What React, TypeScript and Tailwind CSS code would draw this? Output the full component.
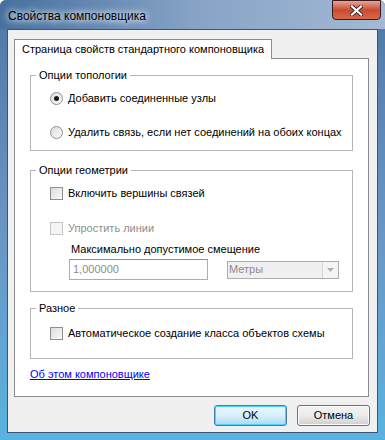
import { useState } from "react";

const font = { fontFamily: '"Liberation Sans", Arial, sans-serif' };

function Radio({ checked, label }: { checked: boolean; label: string }) {
  return (
    <div className="flex items-center gap-[5px] h-[16px] whitespace-nowrap">
      <span className="shrink-0 w-[13px] h-[13px] rounded-full border border-[#8e8f8f] bg-gradient-to-br from-[#dcdcdc] to-[#fbfbfb] flex items-center justify-center">
        {checked && <span className="w-[5px] h-[5px] rounded-full bg-[#1a1a1a]" />}
      </span>
      <span className="text-[11px] text-black leading-none">{label}</span>
    </div>
  );
}

function Check({ label, disabled }: { label: string; disabled?: boolean }) {
  return (
    <div className="flex items-center gap-[5px] h-[16px] whitespace-nowrap">
      <span
        className={`shrink-0 w-[13px] h-[13px] border ${
          disabled ? "border-[#c6c6c6] bg-[#f4f4f4]" : "border-[#8e8f8f] bg-gradient-to-br from-[#dcdcdc] to-[#fbfbfb]"
        }`}
      />
      <span className={`text-[11px] leading-none ${disabled ? "text-[#8d8d8d]" : "text-black"}`}>{label}</span>
    </div>
  );
}

function Group({ title, className, children }: { title: string; className: string; children: React.ReactNode }) {
  return (
    <div className={`relative border border-[#b5b5b5] ${className}`}>
      <span className="absolute -top-[9px] left-[5px] bg-white px-[3px] text-[11px] leading-[16px] text-black whitespace-nowrap">{title}</span>
      {children}
    </div>
  );
}

export default function App() {
  const [sel] = useState(0);
  return (
    <div
      className="w-[385px] h-[440px] flex flex-col bg-gradient-to-b from-[#4f77a6] via-[#6a94c4] to-[#58b2df] rounded-t-[6px]"
      style={font}
    >
      {/* заголовок */}
      <div className="h-[29px] flex items-start relative bg-gradient-to-r from-[#46709f] via-[#86a3c6] to-[#a3b9d4] rounded-t-[6px]">
        <span className="ml-[8px] mt-[7px] text-[12px] text-black [text-shadow:0_0_6px_#fff,0_0_8px_#fff]">
          Свойства компоновщика
        </span>
        <div className="absolute right-[4px] top-0 w-[49px] h-[20px] rounded-b-[4px] border border-[#3a1a1a] bg-gradient-to-b from-[#e8a493] via-[#c94a32] to-[#d9694b] flex items-center justify-center">
          <svg width="13" height="11" viewBox="0 0 13 11">
            <path d="M2 1.5 L11 9.5 M11 1.5 L2 9.5" stroke="#3a2a2a" strokeWidth="4" strokeLinecap="square" />
            <path d="M2 1.5 L11 9.5 M11 1.5 L2 9.5" stroke="#ffffff" strokeWidth="2.2" strokeLinecap="square" />
          </svg>
        </div>
      </div>

      {/* клиентская область */}
      <div className="mx-[7px] mb-[7px] flex-1 bg-[#f0f0f0] border border-[#3d5575] flex flex-col px-[6px] pt-[8px]">
        <div className="flex">
          <div className="h-[20px] px-[7px] border border-b-0 border-[#898c95] bg-white text-[11px] leading-[19px] text-black relative top-[1px] whitespace-nowrap">
            Страница свойств стандартного компоновщика
          </div>
        </div>
        <div className="w-[355px] h-[339px] border border-[#898c95] bg-white px-[15px] pt-[16px] flex flex-col">
          <Group title="Опции топологии" className="h-[76px] pl-[19px] pt-[14px] flex flex-col gap-[18px]">
            <Radio checked={sel === 0} label="Добавить соединенные узлы" />
            <Radio checked={sel === 1} label="Удалить связь, если нет соединений на обоих концах" />
          </Group>

          <Group title="Опции геометрии" className="mt-[19px] h-[122px] pl-[19px] pt-[14px] flex flex-col">
            <Check label="Включить вершины связей" />
            <div className="mt-[19px]">
              <Check label="Упростить линии" disabled />
            </div>
            <div className="mt-[5px] pl-[21px] text-[11px] leading-[16px] text-black">Максимально допустимое смещение</div>
            <div className="mt-[2px] pl-[19px] flex items-center gap-[19px]">
              <div className="w-[139px] h-[21px] border border-[#abadb3] border-t-[#8c8c8c] bg-white text-[11px] leading-[19px] text-[#8d8d8d] pl-[3px]">
                1,000000
              </div>
              <div className="w-[112px] h-[18px] border border-[#adadad] bg-[#f0f0f0] flex items-center">
                <span className="flex-1 text-[11px] leading-none text-[#8d8d8d] pl-[1px]">Метры</span>
                <span className="w-[16px] h-[16px] border-l border-[#d6d6d6] bg-[#f4f4f4] flex items-center justify-center">
                  <svg width="7" height="4" viewBox="0 0 7 4">
                    <path d="M0 0 H7 L3.5 4 Z" fill="#b0b0b0" />
                  </svg>
                </span>
              </div>
            </div>
          </Group>

          <Group title="Разное" className="mt-[16px] h-[51px] pl-[19px] pt-[16px]">
            <Check label="Автоматическое создание класса объектов схемы" />
          </Group>

          <a href="#" className="mt-[7px] text-[11px] leading-[16px] text-[#0000ff] underline self-start">
            Об этом компоновщике
          </a>
        </div>

        <div className="mt-[8px] flex justify-end gap-[10px] pr-[1px]">
          <button className="w-[73px] h-[21px] rounded-[3px] border border-[#3c7fb1] bg-gradient-to-b from-[#eaf6fd] via-[#d9f0fc] to-[#a7d9f5] text-[11px] text-black shadow-[inset_0_0_0_1px_#48d4f4]">
            OK
          </button>
          <button className="w-[73px] h-[21px] rounded-[3px] border border-[#707070] bg-gradient-to-b from-[#f2f2f2] via-[#ebebeb] to-[#cfcfcf] text-[11px] text-black shadow-[inset_0_0_0_1px_#fcfcfc]">
            Отмена
          </button>
        </div>
      </div>
    </div>
  );
}
